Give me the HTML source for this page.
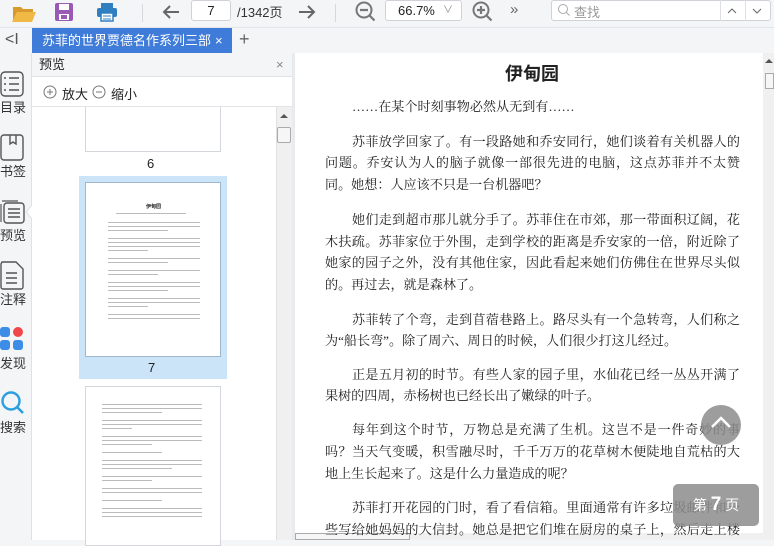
<!DOCTYPE html>
<html><head><meta charset="utf-8"><style>
*{margin:0;padding:0;box-sizing:border-box}
body{width:774px;height:540px;overflow:hidden;background:#f3f5f7;font-family:"Liberation Sans","Noto Sans CJK SC",sans-serif;position:relative;color:#222}
.a{position:absolute}
.ln{position:absolute;left:325px;width:415px;font-size:13.1px;line-height:18px;white-space:nowrap;text-align:justify;text-align-last:justify;font-family:"Liberation Serif","Noto Serif CJK SC",serif;color:#222}
.ind{left:352px;width:388px}
.last{text-align-last:left}
.lbl{position:absolute;left:0;font-size:13px;color:#333;width:26px;text-align:left}
.th{position:absolute;background:#fff;border:1px solid #d3d6da;overflow:hidden}
.tl{position:absolute;left:22px;height:2px;background:#bbb;width:92px}
</style></head><body>
<div class="a" style="left:0;top:0;width:774px;height:28px;background:#f3f5f7;border-bottom:1px solid #e3e6e9"></div>
<svg class="a" style="left:10px;top:2px" width="28" height="22"><path d="M3 5h8l2 2h10v3H7L3 19z" fill="#d99a2b"/><path d="M7 10h19l-4 10H2z" fill="#f0b845"/></svg>
<svg class="a" style="left:54px;top:2px" width="20" height="20"><rect x="1" y="1" width="18" height="18" rx="2" fill="#9b59b6"/><rect x="5" y="2" width="10" height="6" fill="#fff"/><rect x="5" y="12" width="10" height="6" fill="#fff"/><rect x="7" y="13" width="6" height="4" fill="#9b59b6"/></svg>
<svg class="a" style="left:96px;top:2px" width="22" height="20"><rect x="5" y="1" width="12" height="5" fill="#2f7fc1"/><rect x="1" y="6" width="20" height="9" rx="2" fill="#2f7fc1"/><rect x="5" y="11" width="12" height="8" fill="#fff" stroke="#2f7fc1" stroke-width="1.5"/><path d="M7 14h8M7 17h8" stroke="#2f7fc1"/></svg>
<div class="a" style="left:142px;top:4px;width:1px;height:18px;background:#d5d8dc"></div>
<svg class="a" style="left:161px;top:3px" width="20" height="18"><path d="M18 9H3M9 3L3 9l6 6" stroke="#666" stroke-width="2" fill="none"/></svg>
<div class="a" style="left:191px;top:0;width:40px;height:21px;background:#fff;border:1px solid #cfd3d8;border-radius:3px;font-size:13px;text-align:center;line-height:19px">7</div>
<div class="a" style="left:237px;top:2px;font-size:13px;color:#333">/1342页</div>
<svg class="a" style="left:297px;top:3px" width="20" height="18"><path d="M2 9h15M11 3l6 6-6 6" stroke="#666" stroke-width="2" fill="none"/></svg>
<div class="a" style="left:335px;top:4px;width:1px;height:18px;background:#d5d8dc"></div>
<svg class="a" style="left:354px;top:0" width="24" height="24"><circle cx="10" cy="10" r="7.5" stroke="#777" stroke-width="2" fill="none"/><path d="M6 10h8M15.5 15.5l5 5" stroke="#777" stroke-width="2.2"/></svg>
<div class="a" style="left:385px;top:0;width:77px;height:21px;background:#fff;border:1px solid #cfd3d8;border-radius:3px;font-size:13px;line-height:19px;padding-left:12px">66.7%<span style="position:absolute;right:8px;top:0;color:#888;font-size:10px">&#8744;</span></div>
<svg class="a" style="left:471px;top:0" width="24" height="24"><circle cx="10" cy="10" r="7.5" stroke="#777" stroke-width="2" fill="none"/><path d="M6 10h8M10 6v8M15.5 15.5l5 5" stroke="#777" stroke-width="2.2"/></svg>
<div class="a" style="left:510px;top:1px;font-size:15px;color:#666">»</div>
<div class="a" style="left:551px;top:0;width:220px;height:21px;background:#fff;border:1px solid #cfd3d8;border-radius:3px"></div>
<svg class="a" style="left:557px;top:3px" width="14" height="14"><circle cx="6" cy="6" r="4.5" stroke="#aaa" fill="none"/><path d="M9.5 9.5l3 3" stroke="#aaa"/></svg>
<div class="a" style="left:574px;top:2px;font-size:13px;color:#999">查找</div>
<div class="a" style="left:720px;top:0;width:1px;height:21px;background:#dcdfe3"></div>
<div class="a" style="left:745px;top:0;width:1px;height:21px;background:#dcdfe3"></div>
<svg class="a" style="left:727px;top:7px" width="10" height="8"><path d="M1 6l4-4 4 4" stroke="#666" fill="none"/></svg>
<svg class="a" style="left:752px;top:7px" width="10" height="8"><path d="M1 2l4 4 4-4" stroke="#666" fill="none"/></svg>
<div class="a" style="left:5px;top:31px;font-size:16px;color:#555">&lt;I</div>
<div class="a" style="left:32px;top:28px;width:200px;height:25px;background:#3f7bd8;color:#fff;font-size:13px;line-height:25px"><div style="position:absolute;left:10px;top:0;width:170px;overflow:hidden;white-space:nowrap">苏菲的世界贾德名作系列三部曲</div><span style="position:absolute;left:183px;top:0">×</span></div>
<div class="a" style="left:239px;top:29px;font-size:18px;color:#666">+</div>
<div class="a" style="left:0;top:53px;width:32px;height:487px;background:#f3f5f7;border-right:1px solid #dfe2e5"></div>
<svg class="a" style="left:0;top:71px" width="26" height="28"><rect x="1" y="1" width="22" height="24" rx="4" stroke="#555" stroke-width="1.4" fill="none"/><path d="M4 7h2M9 7h10M4 13h2M9 13h10M4 19h2M9 19h10" stroke="#555" stroke-width="1.6"/></svg>
<div class="lbl" style="top:97px">目录</div>
<svg class="a" style="left:0;top:134px" width="26" height="28"><rect x="1" y="1" width="22" height="25" rx="3" stroke="#555" stroke-width="1.4" fill="none"/><path d="M10 1v9l3-2 3 2V1" stroke="#555" stroke-width="1.4" fill="none"/></svg>
<div class="lbl" style="top:161px">书签</div>
<svg class="a" style="left:0;top:198px" width="28" height="28"><path d="M2 3h16M1 6v18" stroke="#555" stroke-width="1.2"/><rect x="4" y="5" width="20" height="20" rx="3" stroke="#555" stroke-width="1.4" fill="#f3f5f7"/><path d="M8 11h12M8 15h12M8 19h12" stroke="#555" stroke-width="1.5"/></svg>
<svg class="a" style="left:25px;top:204px" width="8" height="16"><path d="M8 0L1 8l7 8" fill="#fff" stroke="#dfe2e5"/></svg>
<div class="lbl" style="top:225px">预览</div>
<svg class="a" style="left:0;top:261px" width="26" height="30"><path d="M2 1h14l7 7v18a2 2 0 0 1-2 2H3a2 2 0 0 1-2-2V3z" stroke="#555" stroke-width="1.4" fill="none"/><path d="M6 12h11M6 17h11M6 22h11" stroke="#555" stroke-width="1.5"/></svg>
<div class="lbl" style="top:289px">注释</div>
<svg class="a" style="left:0;top:327px" width="26" height="26"><rect x="0" y="0" width="10" height="10" rx="3" fill="#3b8de8"/><circle cx="18" cy="5" r="5" fill="#f04848"/><rect x="0" y="13" width="10" height="10" rx="3" fill="#3b8de8"/><rect x="13" y="13" width="10" height="10" rx="3" fill="#3b8de8"/></svg>
<div class="lbl" style="top:353px">发现</div>
<svg class="a" style="left:0;top:391px" width="26" height="26"><circle cx="11" cy="10" r="8.5" stroke="#2d9fe0" stroke-width="2.4" fill="none"/><path d="M17 16l6 6" stroke="#2d9fe0" stroke-width="2.6"/></svg>
<div class="lbl" style="top:417px">搜索</div>
<div class="a" style="left:32px;top:53px;width:260px;height:24px;background:#f3f5f7;border-bottom:1px solid #dfe2e5;font-size:13px;line-height:24px;padding-left:7px">预览<span style="position:absolute;left:244px;top:0;color:#888">×</span></div>
<div class="a" style="left:32px;top:77px;width:260px;height:30px;background:#fff;border-bottom:1px solid #e2e4e7"></div>
<svg class="a" style="left:43px;top:85px" width="14" height="14"><circle cx="7" cy="7" r="6" stroke="#777" fill="none"/><path d="M4 7h6M7 4v6" stroke="#777"/></svg>
<div class="a" style="left:62px;top:84px;font-size:13px">放大</div>
<svg class="a" style="left:92px;top:85px" width="14" height="14"><circle cx="7" cy="7" r="6" stroke="#777" fill="none"/><path d="M4 7h6" stroke="#777"/></svg>
<div class="a" style="left:111px;top:84px;font-size:13px">缩小</div>
<div class="a" style="left:32px;top:107px;width:244px;height:433px;background:#fff"></div>
<div class="a" style="left:276px;top:107px;width:16px;height:433px;background:#f0f0f0;border-left:1px solid #e0e0e0"></div>
<svg class="a" style="left:280px;top:113px" width="8" height="6"><path d="M0 5l4-4 4 4z" fill="#555"/></svg>
<div class="a" style="left:277px;top:127px;width:14px;height:16px;background:#f6f6f6;border:1px solid #aaa;border-radius:2px"></div>
<div class="th" style="left:85px;top:107px;width:136px;height:45px;border-top:none"></div>
<div class="a" style="left:147px;top:156px;font-size:13px">6</div>
<div class="a" style="left:79px;top:176px;width:148px;height:203px;background:#cce4f7"></div>
<div class="th" style="left:85px;top:182px;width:136px;height:175px;border-color:#9fb7cc">
<div class="a" style="left:60px;top:20px;font-size:5px;font-weight:bold">伊甸园</div>
<div class="tl" style="top:30px;left:30px;width:70px;height:1px"></div>
<div class="tl" style="top:39px;height:1px"></div><div class="tl" style="top:43px;height:1px"></div><div class="tl" style="top:47px;height:1px;width:60px"></div>
<div class="tl" style="top:55px;height:1px"></div><div class="tl" style="top:59px;height:1px"></div><div class="tl" style="top:63px;height:1px"></div><div class="tl" style="top:67px;height:1px;width:40px"></div>
<div class="tl" style="top:75px;height:1px"></div><div class="tl" style="top:79px;height:1px;width:60px"></div>
<div class="tl" style="top:87px;height:1px"></div><div class="tl" style="top:91px;height:1px;width:50px"></div>
<div class="tl" style="top:99px;height:1px"></div><div class="tl" style="top:103px;height:1px"></div><div class="tl" style="top:107px;height:1px;width:60px"></div>
<div class="tl" style="top:115px;height:1px"></div><div class="tl" style="top:119px;height:1px"></div><div class="tl" style="top:123px;height:1px;width:40px"></div>
<div class="tl" style="top:131px;height:1px"></div><div class="tl" style="top:135px;height:1px"></div>
</div>
<div class="a" style="left:148px;top:360px;font-size:13px">7</div>
<div class="th" style="left:85px;top:386px;width:136px;height:160px">
<div class="tl" style="top:17px;height:1px;left:16px;width:100px"></div><div class="tl" style="top:21px;height:1px;left:16px;width:100px"></div><div class="tl" style="top:25px;height:1px;left:16px;width:60px"></div>
<div class="tl" style="top:33px;height:1px;left:16px;width:100px"></div><div class="tl" style="top:37px;height:1px;left:16px;width:100px"></div><div class="tl" style="top:41px;height:1px;left:16px;width:30px"></div>
<div class="tl" style="top:49px;height:1px;left:16px;width:100px"></div><div class="tl" style="top:53px;height:1px;left:16px;width:100px"></div><div class="tl" style="top:57px;height:1px;left:16px;width:50px"></div>
<div class="tl" style="top:65px;height:1px;left:16px;width:60px"></div>
<div class="tl" style="top:73px;height:1px;left:16px;width:100px"></div><div class="tl" style="top:77px;height:1px;left:16px;width:100px"></div><div class="tl" style="top:81px;height:1px;left:16px;width:70px"></div>
<div class="tl" style="top:89px;height:1px;left:16px;width:100px"></div><div class="tl" style="top:93px;height:1px;left:16px;width:50px"></div>
<div class="tl" style="top:101px;height:1px;left:16px;width:100px"></div><div class="tl" style="top:105px;height:1px;left:16px;width:100px"></div>
<div class="tl" style="top:113px;height:1px;left:16px;width:60px"></div>
<div class="tl" style="top:121px;height:1px;left:16px;width:100px"></div><div class="tl" style="top:125px;height:1px;left:16px;width:100px"></div><div class="tl" style="top:129px;height:1px;left:16px;width:100px"></div>
</div>
<div class="a" style="left:292px;top:53px;width:3px;height:487px;background:#e8eaed"></div>
<div class="a" style="left:295px;top:53px;width:468px;height:480px;background:#fff"></div>
<div class="a" style="left:763px;top:53px;width:11px;height:487px;background:#f0f0f0"></div>
<svg class="a" style="left:765px;top:58px" width="8" height="6"><path d="M0 5l4-4 4 4z" fill="#555"/></svg>
<div class="a" style="left:765px;top:73px;width:9px;height:16px;background:#f6f6f6;border:1px solid #aaa"></div>
<div class="a" style="left:295px;top:533px;width:468px;height:7px;background:#f0f0f0"></div>
<div class="a" style="left:295px;top:533px;width:115px;height:7px;border:1px solid #aaa;background:#f6f6f6"></div>
<div class="a" style="left:505px;top:60px;font-size:18px;font-weight:bold;font-family:'Liberation Sans','Noto Sans CJK SC',sans-serif">伊甸园</div>
<div class="ln ind last" style="top:98px">……在某个时刻事物必然从无到有……</div>
<div class="ln ind" style="top:133px">苏菲放学回家了。有一段路她和乔安同行，她们谈着有关机器人的</div>
<div class="ln" style="top:154px">问题。乔安认为人的脑子就像一部很先进的电脑，这点苏菲并不太赞</div>
<div class="ln last" style="top:176px">同。她想：人应该不只是一台机器吧？</div>
<div class="ln ind" style="top:211px">她们走到超市那儿就分手了。苏菲住在市郊，那一带面积辽阔，花</div>
<div class="ln" style="top:233px">木扶疏。苏菲家位于外围，走到学校的距离是乔安家的一倍，附近除了</div>
<div class="ln" style="top:254px">她家的园子之外，没有其他住家，因此看起来她们仿佛住在世界尽头似</div>
<div class="ln last" style="top:276px">的。再过去，就是森林了。</div>
<div class="ln ind" style="top:311px">苏菲转了个弯，走到苜蓿巷路上。路尽头有一个急转弯，人们称之</div>
<div class="ln last" style="top:332px">为“船长弯”。除了周六、周日的时候，人们很少打这儿经过。</div>
<div class="ln ind" style="top:366px">正是五月初的时节。有些人家的园子里，水仙花已经一丛丛开满了</div>
<div class="ln last" style="top:387px">果树的四周，赤杨树也已经长出了嫩绿的叶子。</div>
<div class="ln ind" style="top:421px">每年到这个时节，万物总是充满了生机。这岂不是一件奇妙的事</div>
<div class="ln" style="top:443px">吗？当天气变暖，积雪融尽时，千千万万的花草树木便陡地自荒枯的大</div>
<div class="ln last" style="top:465px">地上生长起来了。这是什么力量造成的呢？</div>
<div class="ln ind" style="top:499px">苏菲打开花园的门时，看了看信箱。里面通常有许多垃圾邮件和一</div>
<div class="ln" style="top:521px">些写给她妈妈的大信封。她总是把它们堆在厨房的桌子上，然后走上楼</div>
<div class="a" style="left:701px;top:405px;width:40px;height:40px;border-radius:50%;background:rgba(140,140,140,0.85)"></div>
<svg class="a" style="left:709px;top:414px" width="24" height="16"><path d="M3 13l9-9 9 9" stroke="#fff" stroke-width="2.5" fill="none"/></svg>
<div class="a" style="left:673px;top:484px;width:86px;height:42px;border-radius:5px;background:rgba(140,140,140,0.85);color:#fff;font-size:14px;line-height:42px;text-align:center;white-space:nowrap">第 <b style="font-size:19px">7</b> 页</div>
</body></html>
